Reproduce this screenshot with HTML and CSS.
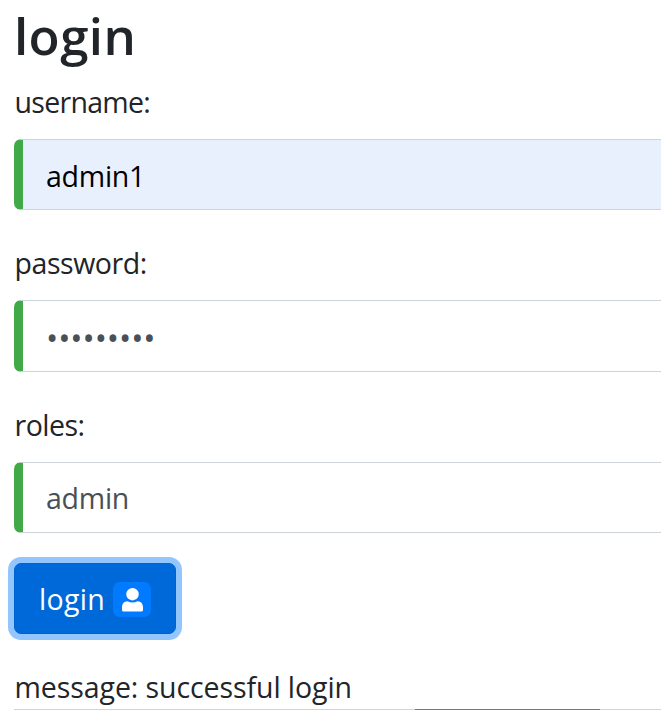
FILE: index.html
```html
<!DOCTYPE html>
<html lang="en">
<head>
<meta charset="utf-8">
<title>login</title>
<link rel="stylesheet" href="styles.css">
</head>
<body>
<main class="page">
  <h1 class="title">login</h1>
  <form class="form">
    <div class="group">
      <label class="label label-username">username:</label>
      <div class="control filled">admin1</div>
    </div>
    <div class="group group-tall">
      <label class="label label-password">password:</label>
      <div class="control secret"><span class="dots">•••••••••</span></div>
    </div>
    <div class="group">
      <label class="label label-roles">roles:</label>
      <div class="control muted">admin</div>
    </div>
    <button class="button" type="button">
      <span>login</span>
      <span class="badge">
        <svg class="user" viewBox="0 0 21 24"><circle cx="10.500" cy="6.200" r="6.200" fill="currentColor"/><path fill="currentColor" d="M5.500 13.200Q10.500 16 15.500 13.200C19 13.200 21 16 21 19.500V22Q21 23.500 19.500 23.500H1.500Q0 23.500 0 22V19.500C0 16 2 13.200 5.500 13.200Z"/></svg>
      </span>
    </button>
  </form>
  <p class="message">message: successful login</p>
  <div class="rule"><div class="rule-dark"></div></div>
</main>
</body>
</html>
```
FILE: styles.css
```css
* { box-sizing: border-box; }
body {
  margin: 0;
  overflow: hidden;
  background: #fff;
  color: #212529;
  font: 28.500px/40px "Open Sans", "Noto Sans", sans-serif;
}
.page { height: 710px; padding: 4px 0 0 14px; overflow: hidden; }
.title { margin: 0; height: 79px; font-size: 51px; line-height: 62px; font-weight: 600; letter-spacing: 0.400px; }
.group { height: 161px; }
.group-tall { height: 162px; }
.label { display: block; height: 56px; padding-left: 0.500px; line-height: 39px; }
.label-username { letter-spacing: -0.700px; }
.label-password { letter-spacing: -0.430px; }
.label-roles { letter-spacing: -0.500px; }
.control {
  display: flex;
  align-items: center;
  height: 71px;
  padding: 1px 0 0 23px;
  border: 1px solid #ced4da;
  border-left: 9px solid #42a948;
  border-right: 0;
  border-radius: 7px 0 0 7px;
  letter-spacing: -0.250px;
}
.filled { padding-top: 3px; background: #e8f0fe; color: #000; }
.muted, .secret { color: #495057; }
.secret { height: 72px; padding-top: 4px; }
.dots { font-size: 32.500px; letter-spacing: -0.050px; }
.button {
  display: flex;
  align-items: center;
  gap: 8px;
  width: 162px;
  height: 71px;
  margin-top: -4px;
  padding: 0 0 0 24px;
  border: 1px solid #0062cc;
  border-radius: 7px;
  background: #0069d9;
  color: #fff;
  font: inherit;
  letter-spacing: 0.300px;
  box-shadow: 0 0 0 6px #93c5ff;
}
.badge {
  display: flex;
  align-items: center;
  justify-content: center;
  width: 38px;
  height: 35px;
  margin-top: 2px;
  border-radius: 7px;
  background: #007bff;
}
.user { display: block; width: 21px; height: 24px; }
.message { height: 75px; margin: 0; padding: 33px 0 0 0.500px; letter-spacing: -0.080px; }
.rule { height: 1px; background: #d3d3d3; }
.rule-dark { width: 185px; height: 1px; margin-left: 401px; background: #777; }
```
